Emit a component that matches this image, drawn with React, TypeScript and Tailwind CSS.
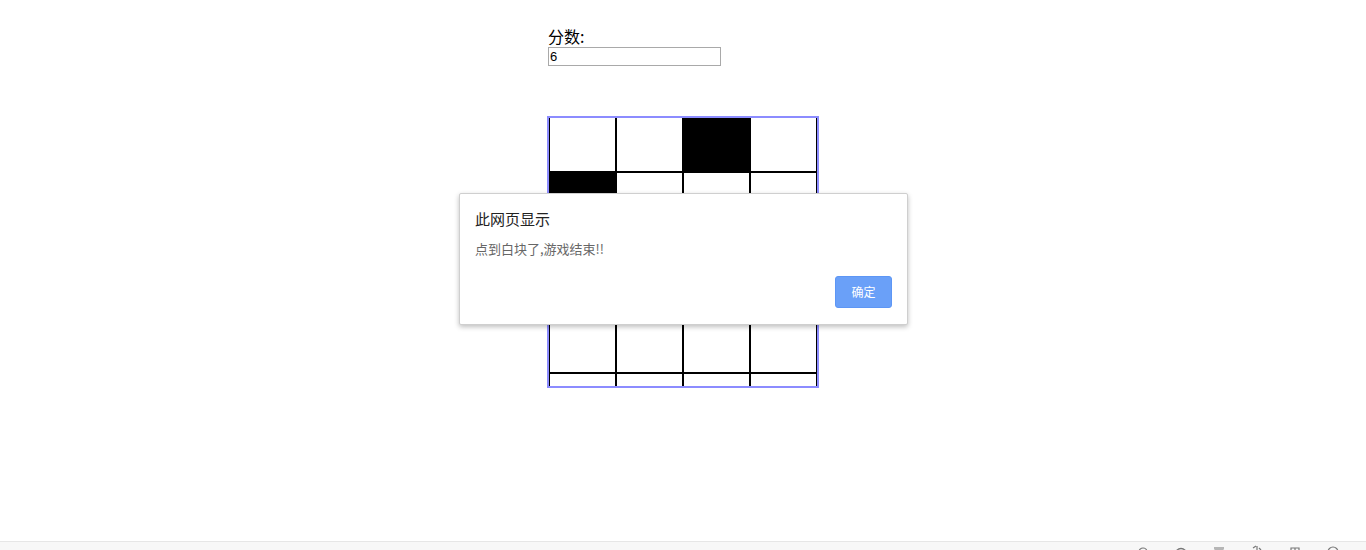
import React from "react";

const rows: number[][] = [
  [0, 0, 1, 0],
  [1, 0, 0, 0],
  [0, 1, 0, 0],
  [0, 0, 0, 0],
  [0, 0, 0, 0],
];

export default function App() {
  return (
    <div
      className="relative flex h-[550px] w-[1366px] flex-col overflow-hidden bg-white"
      style={{ fontFamily: '"Microsoft YaHei", "Noto Sans CJK SC", "Noto Sans", sans-serif' }}
    >
      <div className="flex-1">
        <div className="mx-auto w-[272px] pl-[1px] pt-[26px]">
          <div className="text-[16px] leading-[21px] text-black">分数:</div>
          <input
            readOnly
            value="6"
            className="block h-[19px] w-[173px] border border-[#a9a9a9] px-[1px] text-[13px] leading-[17px] text-black outline-none"
            style={{ fontFamily: '"Liberation Sans", Arial, sans-serif' }}
          />
        </div>
        <div className="mx-auto mt-[50px] h-[272px] w-[272px] overflow-hidden border-2 border-[#8c8cff]">
          <div className="-mt-[13px] flex flex-col">
            {rows.map((r, i) => (
              <div key={i} className="flex">
                {r.map((c, j) => (
                  <div
                    key={j}
                    className={`h-[67px] w-[67px] border border-black ${c ? "bg-black" : "bg-white"}`}
                  />
                ))}
              </div>
            ))}
          </div>
        </div>
      </div>

      <div className="flex h-[9px] items-start justify-end overflow-hidden border-t border-[#e6e6e6] bg-[#f7f7f7] pr-[26px]">
        {[0, 1, 2, 3, 4, 5].map((k) => (
          <svg key={k} width="14" height="14" viewBox="0 0 14 14" className="ml-[24px] mt-[3px] text-[#777]" fill="none" stroke="currentColor" strokeWidth="1.2">
            {k === 0 && <circle cx="7" cy="7" r="4" />}
            {k === 1 && <path d="M2 6 Q7 1 12 6" />}
            {k === 2 && <path d="M2 3 H12 M3 5 H11 V12 H3 Z" />}
            {k === 3 && <path d="M3 3 L6 1 M7 1 V12 M9 3 L11 5" />}
            {k === 4 && <path d="M3 3 H11 V12 H3 Z M7 3 V12" />}
            {k === 5 && <circle cx="7" cy="7" r="5" />}
          </svg>
        ))}
      </div>

      <div className="absolute left-[459px] top-[193px] h-[132px] w-[449px] rounded-[2px] border border-[#cfcfcf] bg-white px-[15px] shadow-[0_2px_5px_rgba(0,0,0,0.25)]">
        <div className="pt-[15px] text-[15px] leading-[20px] text-[#222]">此网页显示</div>
        <div className="mt-[11px] text-[13px] leading-[18px] text-[#666]">点到白块了,游戏结束!!</div>
        <div className="mt-[18px] flex justify-end">
          <button className="h-[32px] w-[57px] rounded-[3px] border border-[#5d96f5] bg-[#6aa0f8] text-[12px] text-white">
            确定
          </button>
        </div>
      </div>
    </div>
  );
}
